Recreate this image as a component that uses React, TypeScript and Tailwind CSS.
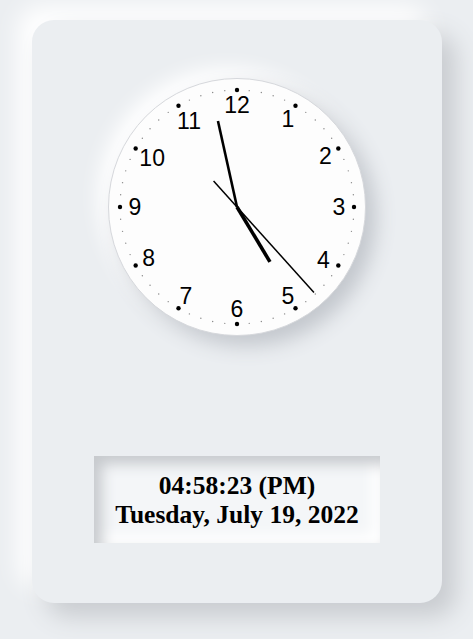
import React from 'react';

const CX = 129;
const CY = 129;

function polar(r: number, deg: number) {
  const a = (deg * Math.PI) / 180;
  return { x: CX + r * Math.sin(a), y: CY - r * Math.cos(a) };
}

// small nudges so the numerals sit where the original face has them
const nudge: Record<number, [number, number]> = {
  10: [3.5, 2],
  11: [3, 2],
  4: [-2, 2],
};

const ClockFace: React.FC = () => {
  const hour = 4;
  const minute = 58;
  const second = 23;
  const secDeg = second * 6;
  const minDeg = minute * 6 - 0.5;
  const hourDeg = (hour % 12) * 30 + minute * 0.5;

  const hand = (deg: number, len: number, tail: number) => {
    const a = polar(len, deg);
    const b = polar(-tail, deg);
    return { x1: b.x, y1: b.y, x2: a.x, y2: a.y };
  };

  return (
    <div className="h-[258px] w-[258px] rounded-full border border-[#d6d8dc] bg-[#fdfdfd] shadow-[10px_10px_20px_#c3c7cd,-10px_-10px_20px_#ffffff]">
      <svg width="256" height="256" viewBox="1 1 256 256" className="block">
        {Array.from({ length: 60 }).map((_, i) => {
          const p = polar(117, i * 6);
          return i % 5 === 0 ? (
            <circle key={i} cx={p.x} cy={p.y} r={2.2} fill="#000" />
          ) : (
            <circle key={i} cx={p.x} cy={p.y} r={0.7} fill="#888" />
          );
        })}
        {Array.from({ length: 12 }).map((_, i) => {
          const n = i + 1;
          const p = polar(102, n * 30);
          const [dx, dy] = nudge[n] ?? [0, 0];
          return (
            <text
              key={n}
              x={p.x + dx}
              y={p.y + dy}
              dy="0.36em"
              textAnchor="middle"
              fontSize="23"
              fontFamily="'Liberation Sans', Arial, sans-serif"
              fill="#000"
            >
              {n}
            </text>
          );
        })}
        <line {...hand(hourDeg, 64, 0)} stroke="#000" strokeWidth={3.6} />
        <line {...hand(minDeg, 88, 0)} stroke="#000" strokeWidth={2.6} />
        <line {...hand(secDeg, 115, 35)} stroke="#000" strokeWidth={1.5} />
      </svg>
    </div>
  );
};

export default function App() {
  return (
    <div className="min-h-[639px] w-full bg-[#ebeef1] px-8 pt-5">
      <div className="flex h-[583px] w-[410px] flex-col items-center rounded-[22px] bg-[#ebeef1] pt-[58px] shadow-[14px_14px_24px_#c9ccd0,-14px_-14px_24px_#ffffff]">
        <ClockFace />
        <div className="mt-[120px] flex h-[87px] w-[286px] flex-col items-center justify-center bg-[#f4f6f8] text-center font-['Liberation_Serif',serif] text-[25.5px] font-bold leading-[29px] text-black shadow-[inset_8px_8px_14px_#c6c9cd,inset_-8px_-8px_14px_#ffffff]">
          <div>04:58:23 (PM)</div>
          <div>Tuesday, July 19, 2022</div>
        </div>
      </div>
    </div>
  );
}
